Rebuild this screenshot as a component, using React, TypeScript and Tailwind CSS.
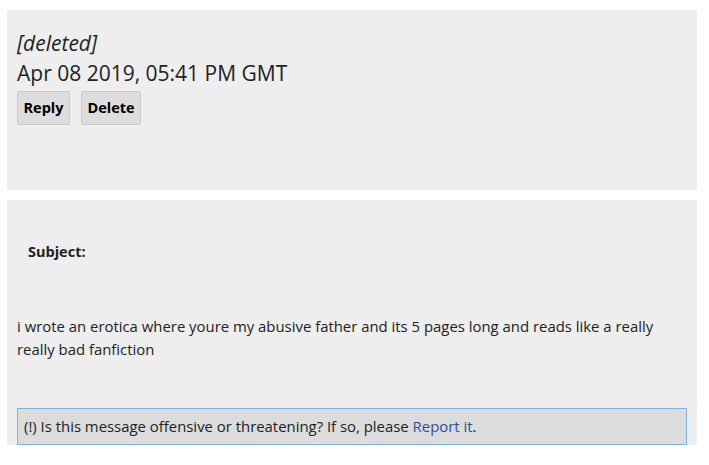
export default function App() {
  return (
    <div className="min-h-[465px] bg-white pt-[10px] pl-[7px] pr-[12px] font-['Open_Sans','Liberation_Sans',sans-serif] text-[#222]">
      <div className="flex h-[180px] flex-col bg-[#eeeeee] px-[10px] pt-[18px]">
        <div className="text-[21px] italic leading-[30px]">[deleted]</div>
        <div className="text-[21px] leading-[30px]">Apr 08 2019, 05:41 PM GMT</div>
        <div className="mt-[3px] flex gap-[11px]">
          <button className="h-[34px] w-[53px] rounded-[2px] border border-[#c8c8c8] bg-[#dddddd] text-[14.5px] font-bold text-black">
            Reply
          </button>
          <button className="h-[34px] w-[60px] rounded-[2px] border border-[#c8c8c8] bg-[#dddddd] text-[14.5px] font-bold text-black">
            Delete
          </button>
        </div>
      </div>

      <div className="mt-[10px] flex h-[245px] flex-col bg-[#eeeeee] px-[10px]">
        <div className="mt-[42px] pl-[11px] text-[14.5px] font-bold leading-[20px]">Subject:</div>
        <p className="mt-[53px] text-[14.9px] leading-[23px]">
          i wrote an erotica where youre my abusive father and its 5 pages long and reads like a really really bad fanfiction
        </p>
        <div className="mt-auto flex h-[37px] items-center border border-[#7fb2e5] bg-[#dcdcdc] px-[6px] text-[14.9px]">
          <span>
            (!) Is this message offensive or threatening? If so, please{" "}
            <a className="text-[#2f4f9a]" href="#">
              Report it
            </a>
            .
          </span>
        </div>
      </div>
    </div>
  );
}
